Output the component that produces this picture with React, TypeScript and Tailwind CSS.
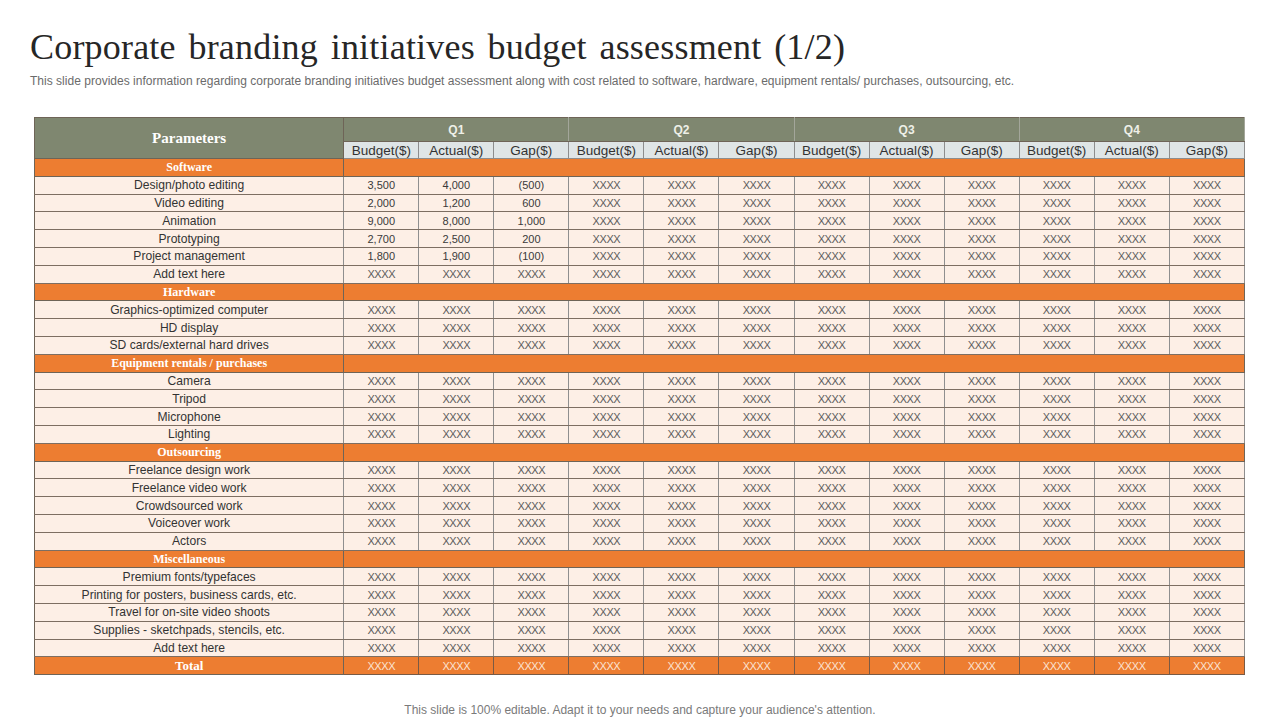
import React from "react";

type Row = { kind: "cat"; label: string } | { kind: "data"; label: string; q1?: string[] } | { kind: "total"; label: string };

const rows: Row[] = [
  { kind: "cat", label: "Software" },
  { kind: "data", label: "Design/photo editing", q1: ["3,500", "4,000", "(500)"] },
  { kind: "data", label: "Video editing", q1: ["2,000", "1,200", "600"] },
  { kind: "data", label: "Animation", q1: ["9,000", "8,000", "1,000"] },
  { kind: "data", label: "Prototyping", q1: ["2,700", "2,500", "200"] },
  { kind: "data", label: "Project management", q1: ["1,800", "1,900", "(100)"] },
  { kind: "data", label: "Add text here" },
  { kind: "cat", label: "Hardware" },
  { kind: "data", label: "Graphics-optimized computer" },
  { kind: "data", label: "HD display" },
  { kind: "data", label: "SD cards/external hard drives" },
  { kind: "cat", label: "Equipment rentals / purchases" },
  { kind: "data", label: "Camera" },
  { kind: "data", label: "Tripod" },
  { kind: "data", label: "Microphone" },
  { kind: "data", label: "Lighting" },
  { kind: "cat", label: "Outsourcing" },
  { kind: "data", label: "Freelance design work" },
  { kind: "data", label: "Freelance video work" },
  { kind: "data", label: "Crowdsourced work" },
  { kind: "data", label: "Voiceover work" },
  { kind: "data", label: "Actors" },
  { kind: "cat", label: "Miscellaneous" },
  { kind: "data", label: "Premium fonts/typefaces" },
  { kind: "data", label: "Printing for posters, business cards, etc." },
  { kind: "data", label: "Travel for on-site video shoots" },
  { kind: "data", label: "Supplies - sketchpads, stencils, etc." },
  { kind: "data", label: "Add text here" },
  { kind: "total", label: "Total" },
];

const quarters = ["Q1", "Q2", "Q3", "Q4"];
const subs = ["Budget($)", "Actual($)", "Gap($)"];

const serif = { fontFamily: '"Liberation Serif", "Times New Roman", serif' };
const sans = { fontFamily: '"Liberation Sans", Arial, sans-serif' };

export default function App() {
  return (
    <div className="w-[1280px] h-[720px] bg-white relative overflow-hidden" style={sans}>
      <div className="px-[30px] pt-[26px]">
        <h1 className="text-[36px] leading-[42px] text-[#262626] tracking-[0.2px] [word-spacing:3.5px]" style={serif}>
          Corporate branding initiatives budget assessment (1/2)
        </h1>
        <p className="text-[12px] leading-[14px] text-[#6b6b6b] mt-[6px] tracking-[0.02px]">
          This slide provides information regarding corporate branding initiatives budget assessment along with cost related to software, hardware, equipment rentals/ purchases, outsourcing, etc.
        </p>
      </div>
      <div className="pl-[34px] mt-[29px]">
        <table className="border-collapse table-fixed w-[1211px] border border-[#6e6457]">
          <colgroup>
            <col className="w-[309px]" />
            {Array.from({ length: 12 }).map((_, i) => (
              <col key={i} className="w-[75px]" />
            ))}
          </colgroup>
          <thead>
            <tr className="h-[24px] bg-[#7f8770]">
              <th rowSpan={2} className="border border-[#6e6457] text-white text-[15px] font-bold p-0 align-middle" style={serif}>
                Parameters
              </th>
              {quarters.map((q) => (
                <th key={q} colSpan={3} className="border-y border-[#6e6457] border-x border-x-[#a3a69a] text-[#eef0e8] text-[12px] font-bold p-0">
                  {q}
                </th>
              ))}
            </tr>
            <tr className="h-[17px] bg-[#dfe5e6]">
              {quarters.map((q) =>
                subs.map((s) => (
                  <th key={q + s} className="border border-[#8d8d8d] text-[#333333] text-[13.5px] font-normal p-0 leading-[15px]">
                    {s}
                  </th>
                ))
              )}
            </tr>
          </thead>
          <tbody>
            {rows.map((r, i) => {
              if (r.kind === "cat") {
                return (
                  <tr key={i} className="h-[17.8px] bg-[#ed7d31]">
                    <td className="border border-[#6e6457] text-white text-[12px] font-bold text-center p-0 leading-[14px]" style={serif}>
                      {r.label}
                    </td>
                    <td colSpan={12} className="border border-[#6e6457] p-0"></td>
                  </tr>
                );
              }
              if (r.kind === "total") {
                return (
                  <tr key={i} className="h-[17.8px] bg-[#ed7d31]">
                    <td className="border border-[#6e6457] text-white text-[13px] font-bold text-center p-0 leading-[14px]" style={serif}>
                      {r.label}
                    </td>
                    {Array.from({ length: 12 }).map((_, j) => (
                      <td key={j} className="border border-[#7a5a44] text-[#fbe3d3] text-[11px] text-center p-0 leading-[14px] tracking-[-0.4px]">
                        XXXX
                      </td>
                    ))}
                  </tr>
                );
              }
              return (
                <tr key={i} className="h-[17.8px] bg-[#fdefe6]">
                  <td className="border-y border-[#7d6e62] border-l border-l-[#6e6457] border-r border-r-[#8f8f8f] text-[#333333] text-[12.1px] text-center p-0 leading-[14px]">
                    {r.label}
                  </td>
                  {Array.from({ length: 12 }).map((_, j) => {
                    const v = j < 3 && r.q1 ? r.q1[j] : "XXXX";
                    const isX = v === "XXXX";
                    return (
                      <td
                        key={j}
                        className={
                          "border-y border-[#7d6e62] border-x border-x-[#8f8f8f] text-center p-0 leading-[14px] text-[11px] " +
                          (isX ? "text-[#5c5c5c] tracking-[-0.4px]" : "text-[#3a3a3a]")
                        }
                      >
                        {v}
                      </td>
                    );
                  })}
                </tr>
              );
            })}
          </tbody>
        </table>
      </div>
      <p className="absolute left-0 right-0 top-[703px] text-center text-[12px] text-[#7a7a7a] leading-[14px]">
        This slide is 100% editable. Adapt it to your needs and capture your audience's attention.
      </p>
    </div>
  );
}
